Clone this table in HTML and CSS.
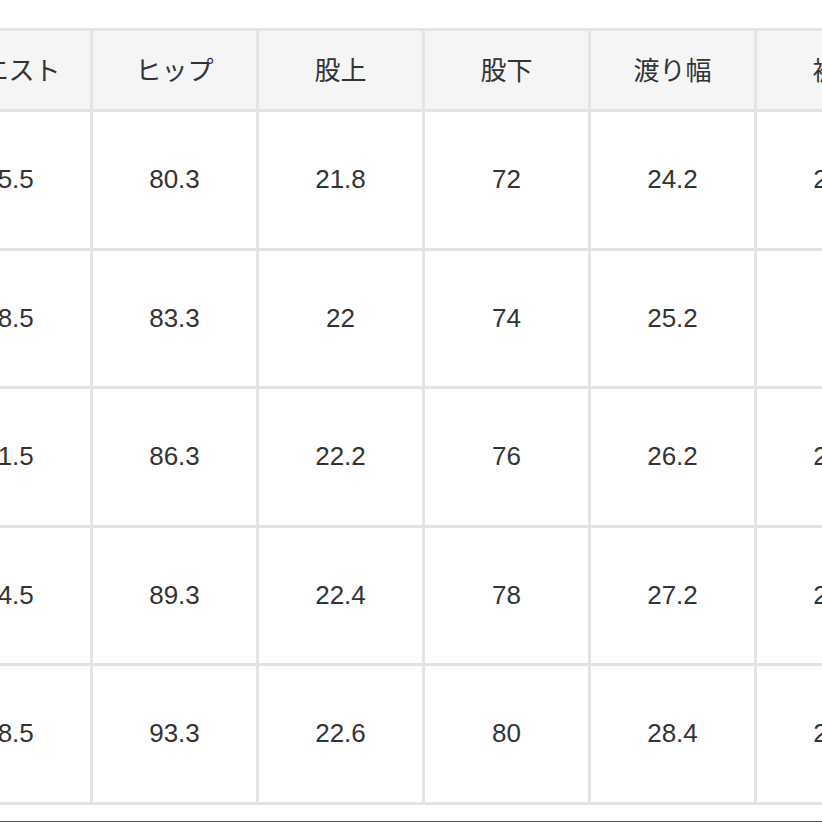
FILE: index.html
```html
<!DOCTYPE html>
<html lang="ja">
<head>
<meta charset="utf-8">
<link rel="stylesheet" href="styles.css">
</head>
<body>
<div class="viewport">
  <table class="size-table">
    <colgroup>
      <col class="col"><col class="col"><col class="col"><col class="col"><col class="col"><col class="col">
    </colgroup>
    <thead>
      <tr>
        <th>ウエスト</th><th>ヒップ</th><th>股上</th><th>股下</th><th>渡り幅</th><th>裾幅</th>
      </tr>
    </thead>
    <tbody>
      <tr><td>65.5</td><td>80.3</td><td>21.8</td><td>72</td><td>24.2</td><td>20.2</td></tr>
      <tr><td>68.5</td><td>83.3</td><td>22</td><td>74</td><td>25.2</td><td>21</td></tr>
      <tr><td>71.5</td><td>86.3</td><td>22.2</td><td>76</td><td>26.2</td><td>21.8</td></tr>
      <tr><td>74.5</td><td>89.3</td><td>22.4</td><td>78</td><td>27.2</td><td>22.6</td></tr>
      <tr><td>78.5</td><td>93.3</td><td>22.6</td><td>80</td><td>28.4</td><td>23.4</td></tr>
    </tbody>
  </table>
  <div class="bottom-rule"></div>
</div>
</body>
</html>
```
FILE: styles.css
```css
html, body {
  margin: 0;
  padding: 0;
  background: #ffffff;
}
.viewport {
  width: 822px;
  height: 822px;
  overflow: hidden;
  padding-top: 28px;
  box-sizing: border-box;
}
.size-table {
  width: 999px;
  min-width: 999px;
  margin-left: -76px;
  border-collapse: collapse;
  table-layout: fixed;
  font-family: "Liberation Sans", "Noto Sans CJK JP", sans-serif;
  font-size: 26px;
  color: #333333;
}
.size-table .col {
  width: 166px;
}
.size-table th,
.size-table td {
  border: 3px solid #e4e4e4;
  padding: 0;
  text-align: center;
  vertical-align: middle;
  white-space: nowrap;
}
.size-table th {
  height: 75px;
  padding-bottom: 3px;
  background: #f5f5f5;
  font-weight: normal;
  font-family: "Noto Sans CJK JP", sans-serif;
}
.size-table td {
  height: 135.5px;
  background: #ffffff;
}
.bottom-rule {
  margin-top: 16px;
  height: 2px;
  background: #5a5a5a;
}
```
